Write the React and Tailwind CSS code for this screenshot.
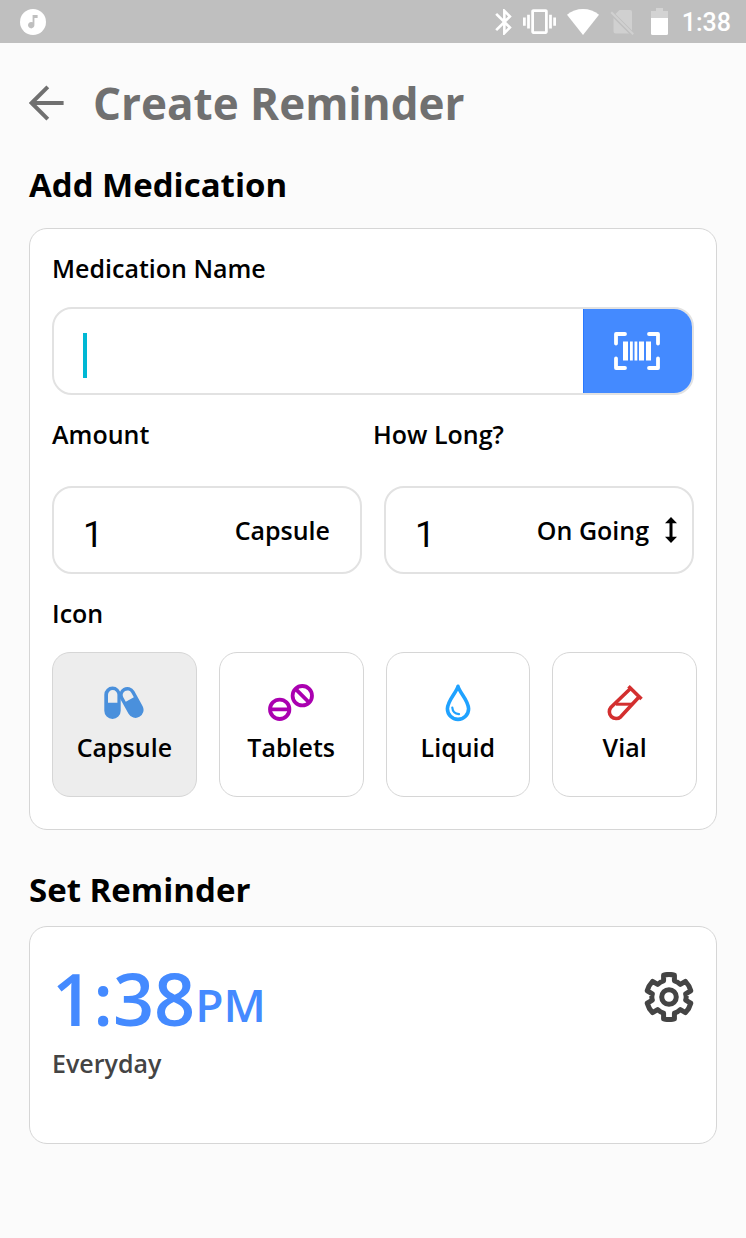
import React from "react";

function StatusBar() {
  return (
    <div className="flex h-[43px] items-center gap-[11px] bg-[#bfbfbf] pl-5 pr-[15px] text-white">
      <svg className="h-[26px] w-[26px]" viewBox="0 0 26 26" aria-hidden="true">
        <circle cx="13" cy="13" r="13" fill="#fff" />
        <path d="M12.600 6h5v3h-3.200v7.200a3.200 3.200 0 1 1-1.800-2.900z" fill="#bfbfbf" />
      </svg>
      <svg className="ml-auto h-[26px] w-[17px]" viewBox="5 2 12.7 20" fill="currentColor" aria-hidden="true">
        <path d="M17.71 7.71L12 2h-1v7.59L6.41 5 5 6.41 10.59 12 5 17.59 6.41 19 11 14.41V22h1l5.71-5.71-4.3-4.29 4.3-4.29zM13 5.83l1.88 1.88L13 9.59V5.83zm1.88 10.46L13 18.17v-3.76l1.88 1.88z" />
      </svg>
      <svg className="h-[33px] w-[33px]" viewBox="0 0 24 24" fill="currentColor" aria-hidden="true">
        <path d="M0 15h2V9H0v6zm3 2h2V7H3v10zm19-8v6h2V9h-2zm-3 8h2V7h-2v10zM16.500 3h-9C6.670 3 6 3.670 6 4.500v15c0 .83.67 1.500 1.500 1.500h9c.83 0 1.500-.67 1.500-1.500v-15c0-.83-.67-1.500-1.500-1.500zM16 19H8V5h8v14z" />
      </svg>
      <svg className="h-[26px] w-8" viewBox="0 0 32 26" fill="currentColor" aria-hidden="true">
        <path d="M16 26 0 5.800C4.500 2 10 0 16 0s11.500 2 16 5.800z" />
      </svg>
      <svg className="h-[26px] w-6" viewBox="0 0 24 26" aria-hidden="true">
        <path d="M9.500 1H20q2 0 2 2v18.500L5.500 5zM3.500 9 19 24.500H5.500q-2 0-2-2z" fill="#d0d0d0" />
        <path d="m1.200 3.200 22 22" stroke="#d0d0d0" strokeWidth="2" />
      </svg>
      <svg className="ml-[6px] h-[27px] w-[17px]" viewBox="0 0 17 27" aria-hidden="true">
        <path d="M5 0h7v3h5v8H0V3h5z" fill="#d3d3d3" />
        <path d="M0 10h17v15.500q0 1.500-1.500 1.500h-14Q0 27 0 25.500z" fill="#fff" />
      </svg>
      <span className="ml-[3px] pt-[2px] font-['Roboto',sans-serif] text-[25px] font-medium leading-8">1:38</span>
    </div>
  );
}

function BarcodeIcon() {
  return (
    <svg className="h-[38px] w-[46px]" viewBox="0 0 46 38" fill="#fff" aria-hidden="true">
      <path
        d="M11 2H2v9.500M35 2h9v9.500M11 36H2v-9.500M35 36h9v-9.500"
        fill="none"
        stroke="#fff"
        strokeWidth="3.800"
        strokeLinejoin="round"
        strokeLinecap="round"
      />
      <path d="M9 9.500h5v19H9zM16 9.500h2.800v19H16zM20.500 9.500h2.800v19h-2.800zM25 9.500h5v19h-5zM32 9.500h5v19h-5z" />
    </svg>
  );
}

function CapsuleIcon() {
  return (
    <svg className="h-[38px] w-10" viewBox="0 -2 40 38" fill="#4a90dc" fillRule="evenodd" aria-hidden="true">
      <path d="M.3 8.800a8.200 8.200 0 0 1 16.400 0v16a8.200 8.200 0 0 1-16.400 0zM4 16.800h9.400v-8a4.700 4.700 0 0 0-9.400 0z" />
      <g transform="translate(23.300 9) rotate(-29)">
        <path d="M-8 0a8 8 0 0 1 16 0v17a8 8 0 0 1-16 0zM-4.600 5.200h9.200V0a4.600 4.600 0 0 0-9.200 0z" />
      </g>
    </svg>
  );
}

function TabletsIcon() {
  return (
    <svg className="h-[38px] w-[46px]" viewBox="0 0 46 38" fill="none" stroke="#aa00b0" strokeWidth="3.800" aria-hidden="true">
      <circle cx="11.700" cy="25.300" r="9.700" />
      <path d="M2 25.300h19.400M27.500 4.900l13.600 13.600" />
      <circle cx="34.300" cy="11.700" r="9.700" />
    </svg>
  );
}

function LiquidIcon() {
  return (
    <svg className="h-[38px] w-[26px]" viewBox="0 0 26 38" fill="none" stroke="#1fa2ff" strokeLinejoin="round" strokeLinecap="round" aria-hidden="true">
      <path d="M13 2.300C11.500 8.500 2.400 16.500 2.400 24.800a10.600 10.600 0 0 0 21.200 0C23.600 16.500 14.500 8.500 13 2.300z" strokeWidth="3.600" />
      <path d="M7.300 23.500q.4 6 6.700 6.700" strokeWidth="2.200" />
    </svg>
  );
}

function VialIcon() {
  return (
    <svg className="h-[38px] w-9" viewBox="0 -1 36 38" fill="none" stroke="#d32f2f" strokeWidth="3.600" strokeLinejoin="round" aria-hidden="true">
      <path d="M21.500 1.300 34.500 14" />
      <path d="M23 4 4 22.300a6.800 6.800 0 0 0 9.700 9.500L31.500 12.500" />
      <path d="M9 19.200h17" strokeWidth="3" />
    </svg>
  );
}

function GearIcon() {
  return (
    <svg className="h-[50px] w-[50px]" viewBox="-24 -24 48 48" fill="none" stroke="#444" strokeWidth="4.800" strokeLinejoin="round" aria-hidden="true">
      <path d="M-5.200-15.500V-21Q0-22.400 5.200-21V-15.500Q8-14.700 10.900-12.100L15.800-15Q19.600-11 20.900-6L16-3Q17 0 16 3L20.900 6Q19.600 11 15.800 15L10.900 12.100Q8 14.700 5.200 15.500V21Q0 22.400-5.200 21V15.500Q-8 14.700-10.900 12.100L-15.800 15Q-19.600 11-20.900 6L-16 3Q-17 0-16-3L-20.900-6Q-19.600-11-15.800-15L-10.900-12.100Q-8-14.700-5.200-15.500z" />
      <circle r="7" />
    </svg>
  );
}

const icons = [
  { name: "Capsule", Icon: CapsuleIcon, selected: true },
  { name: "Tablets", Icon: TabletsIcon },
  { name: "Liquid", Icon: LiquidIcon },
  { name: "Vial", Icon: VialIcon },
];

export default function App() {
  return (
    <div className="min-h-screen bg-[#fbfbfb] font-['Open_Sans',sans-serif] text-black">
      <StatusBar />
      <header className="flex h-[120px] items-center gap-[28px] px-[29px]">
        <button type="button" aria-label="Back">
          <svg className="h-9 w-9" viewBox="0 0 36 36" fill="none" stroke="#707070" strokeWidth="4" aria-hidden="true">
            <path d="M18.800 1.800 2.600 18l16.200 16.200M2.600 18h32" />
          </svg>
        </button>
        <h1 className="text-[44px] font-bold leading-[60px] text-[#707070]">Create Reminder</h1>
      </header>

      <main className="px-[29px]">
        <h2 className="text-[33px] font-bold leading-[44px]">Add Medication</h2>
        <section className="mt-[21px] rounded-[18px] border border-[#d6d6d6] bg-white px-[22px] pb-8 pt-[21px] text-[25px] font-semibold leading-9">
          <label htmlFor="medication" className="block">Medication Name</label>
          <div className="mt-[21px] flex h-[88px] items-stretch overflow-hidden rounded-[20px] border-2 border-[#e2e2e2] pl-[29px]">
            <span className="mt-6 h-[45px] w-1 bg-[#00b8d4]" />
            <input id="medication" type="text" className="min-w-0 flex-1 px-2 outline-none" />
            <button type="button" aria-label="Scan barcode" className="flex w-[109px] items-center justify-center border-l border-[#2979ff] bg-[#448aff] pr-[2px]">
              <BarcodeIcon />
            </button>
          </div>

          <div className="mt-[21px] grid grid-cols-2">
            <label htmlFor="amount">Amount</label>
            <label htmlFor="duration">How Long?</label>
          </div>
          <div className="mt-[34px] grid grid-cols-2 gap-[22px]">
            <div className="flex h-[88px] items-center rounded-[20px] border-2 border-[#e2e2e2] pl-[29px] pr-[30px]">
              <input id="amount" type="text" inputMode="numeric" defaultValue="1" className="min-w-0 flex-1 pt-[10px] font-['Roboto',sans-serif] text-4xl font-normal outline-none" />
              <span>Capsule</span>
            </div>
            <div className="flex h-[88px] items-center rounded-[20px] border-2 border-[#e2e2e2] pl-[29px] pr-[15px]">
              <input id="duration" type="text" inputMode="numeric" defaultValue="1" className="min-w-0 flex-1 pt-[10px] font-['Roboto',sans-serif] text-4xl font-normal outline-none" />
              <select aria-label="Duration unit" className="appearance-none bg-transparent outline-none [field-sizing:content]">
                <option>On Going</option>
              </select>
              <svg className="ml-4 h-[26px] w-3" viewBox="0 0 12 26" aria-hidden="true">
                <path d="M6 0l6 6.200H7.500v13.600H12L6 26l-6-6.200h4.500V6.200H0z" />
              </svg>
            </div>
          </div>

          <p id="icon-label" className="mt-[21px]">Icon</p>
          <div role="group" aria-labelledby="icon-label" className="-mr-[3px] mt-[21px] grid grid-cols-4 gap-[22px]">
            {icons.map(({ name, Icon, selected }) => (
              <button
                key={name}
                type="button"
                aria-pressed={!!selected}
                className={`flex aspect-square flex-col items-center justify-center gap-[7px] rounded-[18px] border border-[#d6d6d6] ${selected ? "bg-[#ededed]" : "bg-white"}`}
              >
                <Icon />
                <span>{name}</span>
              </button>
            ))}
          </div>
        </section>

        <h2 className="mt-[38px] text-[33px] font-bold leading-[44px]">Set Reminder</h2>
        <section className="mt-[14px] flex items-start justify-between rounded-[18px] border border-[#d6d6d6] bg-white px-[22px] pb-[62px] pt-[31px] font-semibold">
          <div>
            <p className="flex items-end text-[#448aff]">
              <span className="text-[72px] leading-[80px]">1:38</span>
              <span className="text-[46px] leading-[68px]">PM</span>
            </p>
            <p className="mt-[7px] text-[25px] leading-9 text-[#444]">Everyday</p>
          </div>
          <button type="button" aria-label="Reminder settings" className="mt-[14px]">
            <GearIcon />
          </button>
        </section>
      </main>
    </div>
  );
}
